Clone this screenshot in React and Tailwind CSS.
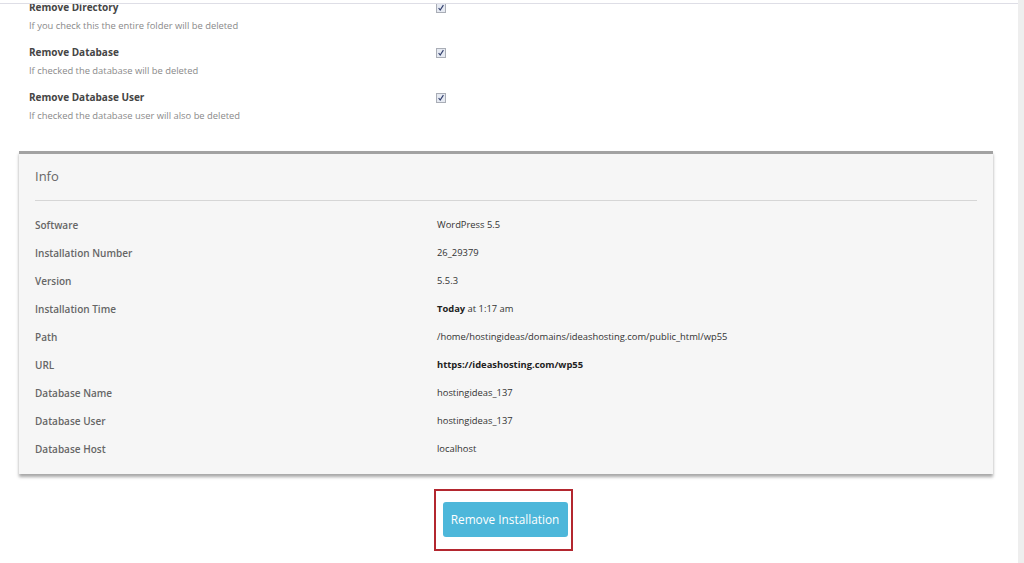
import React from "react";

const options = [
  { title: "Remove Directory", desc: "If you check this the entire folder will be deleted" },
  { title: "Remove Database", desc: "If checked the database will be deleted" },
  { title: "Remove Database User", desc: "If checked the database user will also be deleted" },
];

const info = [
  { label: "Software", value: "WordPress 5.5" },
  { label: "Installation Number", value: "26_29379" },
  { label: "Version", value: "5.5.3" },
  {
    label: "Installation Time",
    value: (
      <>
        <span className="font-bold text-[#222]">Today</span> at 1:17 am
      </>
    ),
  },
  { label: "Path", value: "/home/hostingideas/domains/ideashosting.com/public_html/wp55" },
  { label: "URL", value: <span className="font-bold text-[#222]">https://ideashosting.com/wp55</span> },
  { label: "Database Name", value: "hostingideas_137" },
  { label: "Database User", value: "hostingideas_137" },
  { label: "Database Host", value: "localhost" },
];

const CheckBox = () => (
  <div className="mt-[2px] w-[10px] h-[10px] border border-[#a9adb6] bg-[#e6eaf2] flex items-center justify-center">
    <svg viewBox="0 0 10 10" className="w-[8px] h-[8px]">
      <path d="M2 5 L4 7.5 L8 1.5" fill="none" stroke="#34416e" strokeWidth="1.5" />
    </svg>
  </div>
);

export default function App() {
  return (
    <div className="w-[1024px] h-[563px] flex overflow-hidden bg-white font-['Open_Sans',sans-serif] relative">
      {/* thin browser edge over the page */}
      <div className="absolute left-0 top-[3px] w-[1018px] h-px bg-[#dedee6]" />

      <div className="flex-1 flex flex-col">
        {/* delete options */}
        <div className="pl-[29px] pt-[1px] flex flex-col gap-[14px]">
          {options.map((o) => (
            <div key={o.title} className="flex items-start">
              <div className="w-[407px] flex flex-col gap-[7px]">
                <div className="text-[10px] leading-[12px] font-bold text-[#454545]">{o.title}</div>
                <div className="text-[9.4px] leading-[12px] text-[#8a8a8a]">{o.desc}</div>
              </div>
              <CheckBox />
            </div>
          ))}
        </div>

        {/* info panel */}
        <div className="ml-[19px] mt-[29px] w-[974px] bg-[#f6f6f6] border-t-[3px] border-[#a2a2a2] px-[16px] pt-[13px] pb-[11px] shadow-[0_3px_3px_rgba(0,0,0,0.35)]">
          <div className="text-[13px] leading-[18px] text-[#666]">Info</div>
          <div className="mt-[15px] h-px bg-[#d6d6d6]" />
          <div className="mt-[10px] flex flex-col">
            {info.map((r) => (
              <div key={r.label} className="h-[28px] flex items-center">
                <div className="w-[402px] text-[10px] font-semibold text-[#666]">{r.label}</div>
                <div className="text-[9.4px] text-[#333]">{r.value}</div>
              </div>
            ))}
          </div>
        </div>

        {/* action */}
        <div className="mt-[15px] flex justify-center pr-[12px]">
          <div className="border-2 border-[#b3272f] pl-[7px] pr-[3px] pt-[11px] pb-[12px]">
            <button className="w-[125px] h-[35px] rounded-[3px] bg-[#4db7da] text-white text-[11.8px]">
              Remove Installation
            </button>
          </div>
        </div>
      </div>

      <div className="w-[6px] bg-[#eeeeee]" />
    </div>
  );
}
